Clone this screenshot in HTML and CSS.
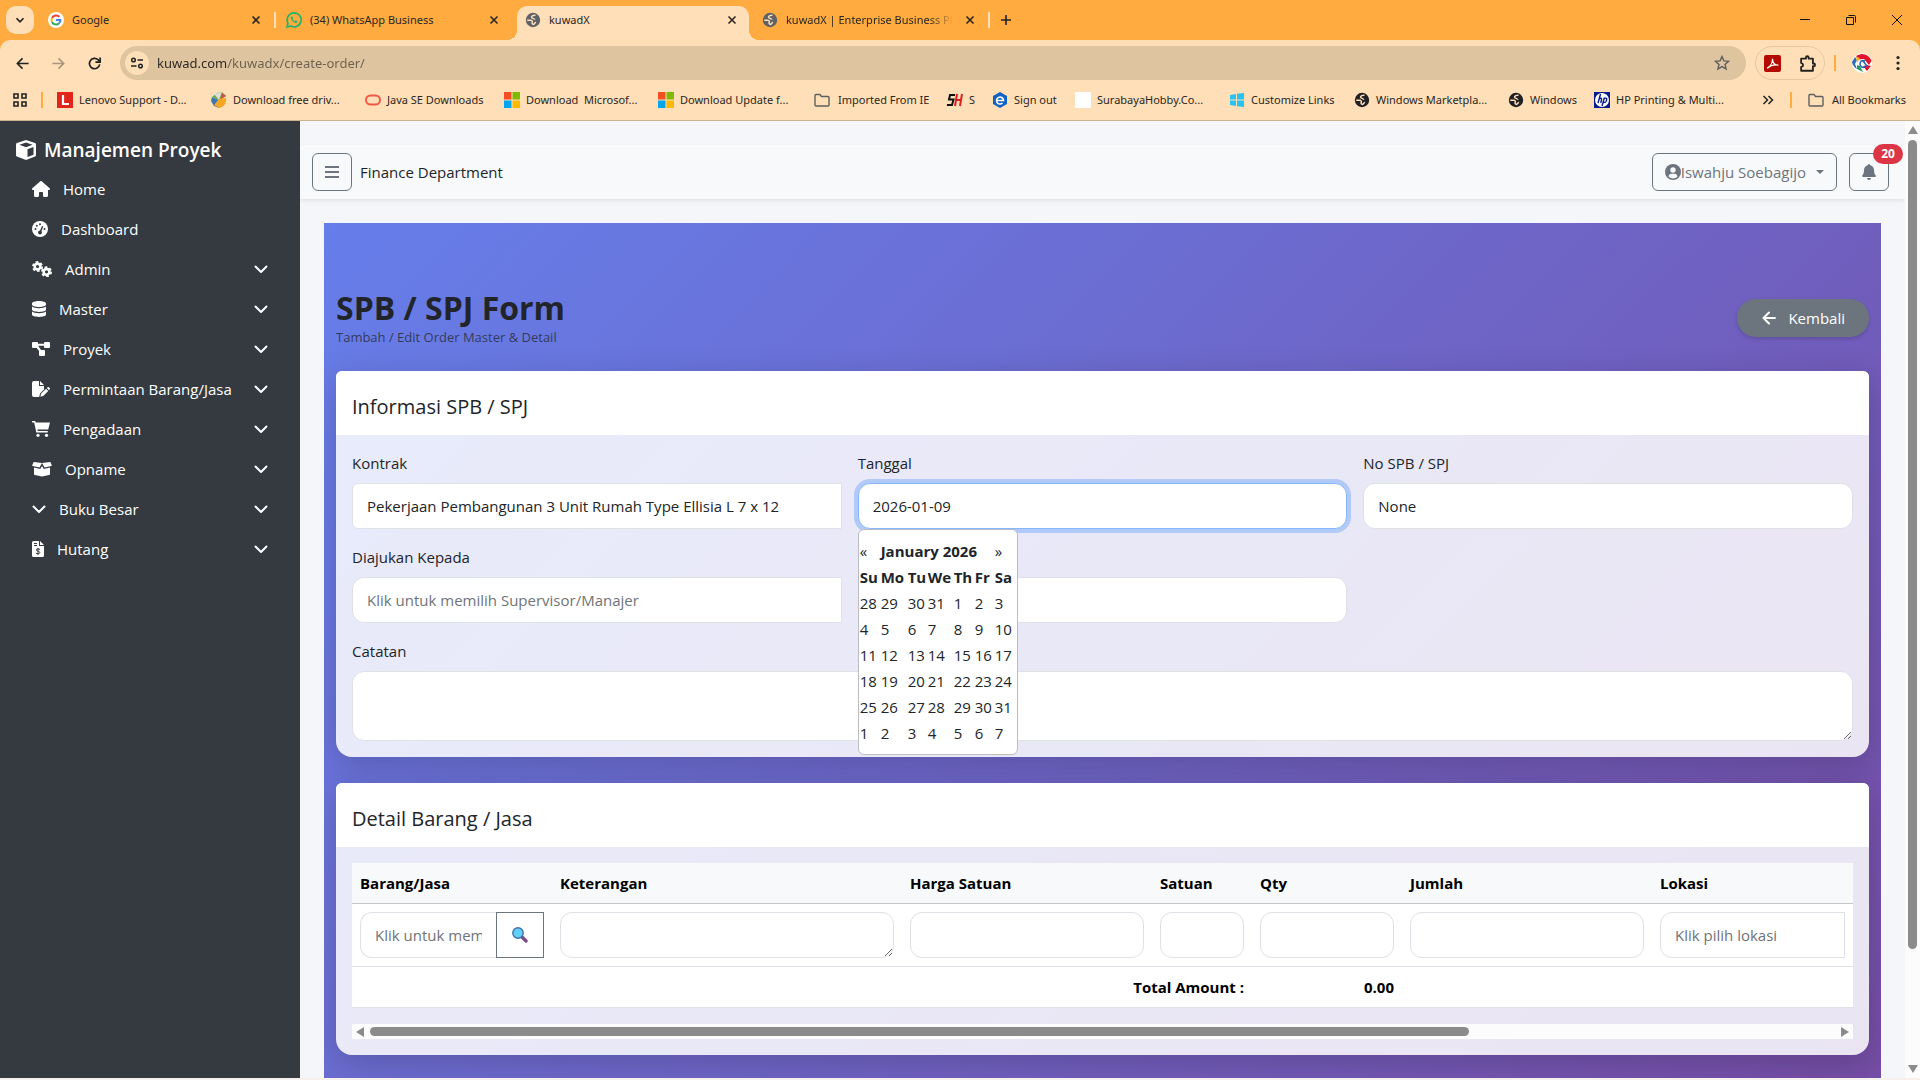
FILE: index.html
```html
<!DOCTYPE html>
<html lang="id">
<head>
<meta charset="UTF-8">
<meta name="viewport" content="width=device-width, initial-scale=1.0">
<title>kuwadX</title>
<link rel="stylesheet" href="styles.css">
</head>
<body>

<!-- shared icons -->
<svg class="icon-defs" aria-hidden="true">
    <symbol id="i-close" viewBox="0 0 16 16"><path d="M4.5 4.5l7 7M11.5 4.5l-7 7" stroke="currentColor" stroke-width="1.6" fill="none"/></symbol>
    <symbol id="i-globe" viewBox="0 0 16 16"><circle cx="8" cy="8" r="7.200" fill="currentColor"/><path d="M10.500 3.200C8.500 3 6.500 3.800 6.500 5.200s3.300 1 3.300 2.600M2.200 8.200h3.200c1.700 0 2.200 1 1.800 2.200s.3 1.800 1.300 2c1-.2 1.300-1.700 2.400-2.200" stroke="#ffdfb8" stroke-width="1.500" fill="none"/></symbol>
    <symbol id="i-ms" viewBox="0 0 16 16"><path fill="#f25022" d="M0 0h7.500v7.500H0z"/><path fill="#7fba00" d="M8.500 0H16v7.500H8.500z"/><path fill="#00a4ef" d="M0 8.500h7.500V16H0z"/><path fill="#ffb900" d="M8.500 8.500H16V16H8.500z"/></symbol>
    <symbol id="i-folder" viewBox="0 0 16 16"><path d="M1 3.500c0-.5.400-1 1-1h4l1.500 2H14c.6 0 1 .5 1 1V13c0 .5-.4 1-1 1H2c-.6 0-1-.5-1-1z" stroke="#5f5f5f" stroke-width="1.400" fill="none"/></symbol>
    <symbol id="i-chevron" viewBox="0 0 14 16"><path d="M1.500 5.500L7 11l5.500-5.500" stroke="currentColor" stroke-width="2" stroke-linecap="round" stroke-linejoin="round" fill="none"/></symbol>
</svg>

<header class="browser">
    <div class="tab-strip">
        <button class="tab-search" aria-label="Search tabs"><svg viewBox="0 0 16 16" width="14" height="14"><path d="M4 6l4 4 4-4" stroke="#222" stroke-width="2" fill="none"/></svg></button>
        <div class="tab tab-divided">
            <svg viewBox="0 0 16 16" class="tab-icon"><circle cx="8" cy="8" r="8" fill="#fff"/><g fill="none" stroke-width="2"><path d="M11.300 4.800A4.500 4.500 0 0 0 4 6" stroke="#ea4335"/><path d="M4 6a4.500 4.500 0 0 0 0 4" stroke="#fbbc05"/><path d="M4 10a4.500 4.500 0 0 0 6.800 1.500" stroke="#34a853"/><path d="M8 8h4.500a4.500 4.500 0 0 1-1.700 3.500" stroke="#4285f4"/></g></svg>
            <a href="#" class="tab-title">Google</a>
            <button class="tab-close" aria-label="Close tab"><svg><use href="#i-close"/></svg></button>
        </div>
        <div class="tab">
            <svg viewBox="0 0 16 16" class="tab-icon"><path d="M1 15l1-3.800A7 7 0 1 1 4.800 14z" fill="none" stroke="#25b466" stroke-width="1.700"/><path d="M5.200 4.500c-1 1.300-.2 3 1.300 4.500s3.600 2.500 4.700 1.300l.3-1-1.800-1-1 .9c-1-.4-1.800-1.200-2.200-2.100l.7-.9-.8-1.800z" fill="#25b466"/></svg>
            <a href="#" class="tab-title">(34) WhatsApp Business</a>
            <button class="tab-close" aria-label="Close tab"><svg><use href="#i-close"/></svg></button>
        </div>
        <div class="tab tab-active">
            <svg class="tab-icon globe-grey"><use href="#i-globe"/></svg>
            <a href="#" class="tab-title">kuwadX</a>
            <button class="tab-close" aria-label="Close tab"><svg><use href="#i-close"/></svg></button>
        </div>
        <div class="tab tab-divided">
            <svg class="tab-icon globe-grey"><use href="#i-globe"/></svg>
            <a href="#" class="tab-title tab-title-fade">kuwadX | Enterprise Business Pla</a>
            <button class="tab-close" aria-label="Close tab"><svg><use href="#i-close"/></svg></button>
        </div>
        <button class="new-tab" aria-label="New tab"><svg viewBox="0 0 16 16"><path d="M8 3v10M3 8h10" stroke="#222" stroke-width="1.600"/></svg></button>
        <div class="window-buttons">
            <button aria-label="Minimize"><svg viewBox="0 0 12 12"><path d="M1 5.500h10" stroke="#111"/></svg></button>
            <button aria-label="Restore"><svg viewBox="0 0 12 12"><path d="M1.500 3.500h7v7h-7zM3.500 1.500h6a1 1 0 0 1 1 1v6" stroke="#111" fill="none"/></svg></button>
            <button aria-label="Close window"><svg viewBox="0 0 12 12"><path d="M1 1l10 10M11 1L1 11" stroke="#111"/></svg></button>
        </div>
    </div>

    <div class="chrome-body">
        <div class="toolbar">
            <button class="nav-btn" aria-label="Back"><svg viewBox="0 0 16 16"><path d="M14.500 8H2.500M8 2.500L2.500 8 8 13.500" stroke="#222" stroke-width="1.700" fill="none"/></svg></button>
            <button class="nav-btn" aria-label="Forward"><svg viewBox="0 0 16 16"><path d="M1.500 8h12M8 2.500L13.500 8 8 13.500" stroke="#a8957c" stroke-width="1.700" fill="none"/></svg></button>
            <button class="nav-btn" aria-label="Reload"><svg viewBox="0 0 16 16"><path d="M13.500 9A5.500 5.500 0 1 1 12 4.200L13.500 6" stroke="#222" stroke-width="1.800" fill="none"/><path d="M14 1.500v5H9" stroke="#222" stroke-width="1.800" fill="none"/></svg></button>
            <div class="omnibox">
                <button class="site-info" aria-label="Site information"><svg viewBox="0 0 14 14"><g stroke="#222" stroke-width="1.500" fill="none"><circle cx="3.500" cy="4" r="1.800"/><path d="M7.500 4H13M1 10h5.500"/><circle cx="10.500" cy="10" r="1.800"/></g></svg></button>
                <input type="text" class="url" aria-label="Address" value="kuwad.com/kuwadx/create-order/">
                <button class="star" aria-label="Bookmark"><svg viewBox="0 0 16 16"><path d="M8 1.500l1.900 4.400 4.700.4-3.600 3.100 1.100 4.700L8 11.600l-4.100 2.500L5 9.400 1.400 6.300l4.700-.4z" stroke="#5f5f5f" stroke-width="1.400" fill="none"/></svg></button>
            </div>
            <div class="extensions">
                <button aria-label="PDF"><svg viewBox="0 0 16 16"><rect width="16" height="16" rx="2" fill="#b30b00"/><path d="M3 12.500c3-1.500 5-5.500 5-9 0 4 2 6 5.500 6C10 8.800 6 9.800 3 12.500z" fill="none" stroke="#fff" stroke-width="1.200"/></svg></button>
                <button aria-label="Extensions"><svg viewBox="0 0 16 16"><path d="M2 3.500h4.500v-1a1.300 1.300 0 0 1 2.600 0v1h4V8h.7a1.300 1.300 0 0 1 0 2.600h-.7v4.200H2v-3.600c2.500-.4 2.500-3.200 0-3.600z" fill="none" stroke="#222" stroke-width="1.700" stroke-linejoin="round"/></svg></button>
            </div>
            <span class="divider"></span>
            <button class="profile" aria-label="Profile"><svg viewBox="0 0 20 20"><circle cx="10" cy="10" r="10" fill="#fff"/><path d="M4 3a10 10 0 0 1 15.500 5L17 12l-5-6-5 .5z" fill="#e0142d"/><path d="M0 9l3-5 2 3-2 4 2 5a10 10 0 0 1-5-7z" fill="#2c6cc0"/><path d="M4 4l4 1-3 5z" fill="#f0b429"/><path d="M5 12l3 1 3 6-6-3z" fill="#239a58"/><path d="M11 13l4-1 4 1-4 5z" fill="#e0142d"/><path d="M13 8c-3-1-5 0-5 3s3 4 5 3M11 8l4 5" stroke="#2468b8" stroke-width="1.500" fill="none"/></svg></button>
            <button class="menu-dots" aria-label="Menu"><svg viewBox="0 0 16 16" fill="#222"><circle cx="8" cy="2.500" r="1.600"/><circle cx="8" cy="8" r="1.600"/><circle cx="8" cy="13.500" r="1.600"/></svg></button>
        </div>

        <nav class="bookmarks">
            <button class="apps" aria-label="Apps"><svg viewBox="0 0 14 14"><path d="M1 1h4v4H1zM9 1h4v4H9zM1 9h4v4H1zM9 9h4v4H9z" stroke="#222" stroke-width="1.600" fill="none"/></svg></button>
            <span class="divider"></span>
            <div class="bookmark-list">
                <a href="#"><svg viewBox="0 0 16 16"><path fill="#e1251b" d="M0 0h16v16H0z"/><path d="M6 3v9h6" stroke="#fff" stroke-width="2.200" fill="none"/></svg>Lenovo Support - D...</a>
                <a href="#"><svg viewBox="0 0 16 16"><path d="M8 8L1 5l-1 4 3 5 5 2z" fill="#3c78b4"/><path d="M8 8l7-4-4-4-5 1-5 4z" fill="#6fa845"/><path d="M3 2l5 6 3-8z" fill="#d8dde0"/><path d="M11 1l4 3-6 4z" fill="#d2543b"/><path d="M8 7l7-1c1 5-2 9-7 10l-5-3z" fill="#f3a722"/></svg>Download free driv...</a>
                <a href="#"><svg viewBox="0 0 16 16"><rect x="1" y="3.500" width="14" height="9" rx="4.500" fill="none" stroke="#ee5a45" stroke-width="2"/></svg>Java SE Downloads</a>
                <a href="#"><svg><use href="#i-ms"/></svg>Download&nbsp; Microsof...</a>
                <a href="#"><svg><use href="#i-ms"/></svg>Download Update f...</a>
                <a href="#" class="folder"><svg><use href="#i-folder"/></svg>Imported From IE</a>
                <a href="#"><svg viewBox="0 0 16 16" fill="none" stroke-width="2"><path d="M8 3H3L2 7.500h4.500L5 13H0" stroke="#111"/><path d="M10 2L8 14M15 2l-2 12M9 8h5" stroke="#e02020"/></svg>S</a>
                <a href="#"><svg viewBox="0 0 16 16"><path d="M8 0l7 4v8l-7 4-7-4V4z" fill="#0f62c4"/><path d="M4.500 8.500h7a3.500 3.500 0 1 0-1 2.500" stroke="#fff" stroke-width="1.600" fill="none"/></svg>Sign out</a>
                <a href="#"><svg viewBox="0 0 16 16"><path fill="#fff" d="M0 0h16v16H0z"/></svg>SurabayaHobby.Co...</a>
                <a href="#"><svg viewBox="0 0 16 16" fill="#27c3f3"><path d="M1 3l6-1v5.500H1zM8 1.800L15 1v6.500H8zM1 8.500h6V14l-6-1zM8 8.500h7V15l-7-.8z"/></svg>Customize Links</a>
                <a href="#"><svg class="globe-dark"><use href="#i-globe"/></svg>Windows Marketpla...</a>
                <a href="#"><svg class="globe-dark"><use href="#i-globe"/></svg>Windows</a>
                <a href="#"><svg viewBox="0 0 16 16"><path fill="#0a1a8c" d="M0 0h16v16H0z"/><circle cx="8" cy="8" r="7" fill="#fff"/><path d="M6.500 2L4 11M4.800 7.500C7 5.500 8 6 7.500 8l-.8 3M10.500 5.500L8 14M10 6.500c3-1 3 .2 2.500 2s-1 2.200-3.500 2" stroke="#0a1a8c" stroke-width="1.400" fill="none"/></svg>HP Printing &amp; Multi...</a>
            </div>
            <button class="more" aria-label="More bookmarks"><svg viewBox="0 0 12 12"><path d="M1.500 2l4 4-4 4M6.500 2l4 4-4 4" stroke="#222" stroke-width="1.500" fill="none"/></svg></button>
            <span class="divider"></span>
            <a href="#" class="all-bookmarks"><svg><use href="#i-folder"/></svg>All Bookmarks</a>
        </nav>
    </div>
</header>

<div class="app">
    <aside class="sidebar">
        <a href="#" class="brand"><svg viewBox="0 0 20 20" width="20" height="20"><path fill="#fff" d="M10 0l9 3q1 .4 1 1.400v10.800q0 1-.9 1.400L10 20l-9.100-3.400Q0 16.200 0 15.200V4.400Q0 3.400 1 3z"/><path d="M3.500 4.800L10 2.500l6.500 2.300L10 7.200zM11.500 9.200l6-2.200v7.800l-6 2.300z" fill="#343a40"/></svg>Manajemen Proyek</a>
        <ul>
            <li><a href="#"><svg viewBox="0 0 576 512" width="18"><path d="M575.800 255.500c0 18-15 32-32 32h-32v185c0 22-18 40-40 40h-80c-22 0-40-18-40-40v-88c0-18-14-32-32-32h-64c-18 0-32 14-32 32v88c0 22-18 40-40 40h-80c-22 0-40-18-40-40V287.600H32c-18 0-32-14-32-32 0-9 3-17 10-24L266.400 8c7-7 15-8 22-8s15 2 21 7L564.800 231.500c8 7 12 15 11 24z"/></svg>Home</a></li>
            <li><a href="#"><svg viewBox="0 0 16 16" width="16"><circle cx="8" cy="8" r="8"/><g fill="#343a40"><circle cx="3.500" cy="8" r="1"/><circle cx="4.800" cy="4.700" r="1"/><circle cx="8" cy="3.200" r="1"/><circle cx="12.500" cy="8" r="1"/><circle cx="8" cy="11.500" r="2"/></g><path d="M8 11.500l2.700-6.300" stroke="#343a40" stroke-width="1.500"/></svg>Dashboard</a></li>
            <li><a href="#"><svg viewBox="0 0 20 16" width="20"><g fill="none" stroke="#fff"><circle cx="5.500" cy="5.500" r="2.900" stroke-width="2.600"/><circle cx="5.500" cy="5.500" r="4.600" stroke-width="1.800" stroke-dasharray="2.600 2.217"/><circle cx="14.500" cy="10.800" r="2.900" stroke-width="2.600"/><circle cx="14.500" cy="10.800" r="4.600" stroke-width="1.800" stroke-dasharray="2.600 2.217"/></g></svg>Admin<svg class="caret"><use href="#i-chevron"/></svg></a></li>
            <li><a href="#"><svg viewBox="0 0 14 16" width="14"><path d="M0 2.500C0 1 3 0 7 0s7 1 7 2.500v1C14 5 11 6 7 6S0 5 0 3.500zM0 5.600C1.500 6.700 4 7.200 7 7.200s5.500-.5 7-1.600v3C14 10 11 11 7 11S0 10 0 8.600zM0 10.600c1.500 1.100 4 1.600 7 1.600s5.500-.5 7-1.600v3c0 1.400-3 2.400-7 2.400s-7-1-7-2.400z"/></svg>Master<svg class="caret"><use href="#i-chevron"/></svg></a></li>
            <li><a href="#"><svg viewBox="0 0 18 16" width="18"><path d="M1 1h4q1 0 1 1v.8h6V2q0-1 1-1h4q1 0 1 1v4q0 1-1 1h-4q-1 0-1-1V4.800H6.200L9 9h3q1 0 1 1v4q0 1-1 1H8q-1 0-1-1v-4L4.800 7H1Q0 7 0 6V2q0-1 1-1z"/></svg>Proyek<svg class="caret"><use href="#i-chevron"/></svg></a></li>
            <li><a href="#"><svg viewBox="0 0 18 16" width="18"><path d="M2 0h5v5h5v3.500l-4 4L7.200 16H2q-2 0-2-2V2q0-2 2-2zM8 0l4 4H8zM9 12.800l5-5 2.200 2.200-5 5-2.800.7zM14.800 7l.9-.8q.6-.5 1.200 0l.9 1q.5.600 0 1.100l-.8.900z"/></svg>Permintaan Barang/Jasa<svg class="caret"><use href="#i-chevron"/></svg></a></li>
            <li><a href="#"><svg viewBox="0 0 18 16" width="18"><path d="M0 0h3.200l.5 1.500H18L16.200 8.500H5.400l.4 1.600h10v1.500H4.300L2.200 1.500H0z"/><circle cx="6" cy="14.300" r="1.600"/><circle cx="14.500" cy="14.300" r="1.600"/></svg>Pengadaan<svg class="caret"><use href="#i-chevron"/></svg></a></li>
            <li><a href="#"><svg viewBox="0 0 20 16" width="20"><path d="M1.700 1L10 2l-2.500 4.500L.8 5q-.9-.3-.5-1.100zM18.300 1L10 2l2.500 4.500 6.700-1.500q.9-.3.5-1.100zM2 6.500l6.200 1.600L10 5l1.800 3.100L18 6.500V13q0 .8-.8 1L10 15.500 2.800 14Q2 13.800 2 13z"/></svg>Opname<svg class="caret"><use href="#i-chevron"/></svg></a></li>
            <li><a href="#"><svg width="14"><use href="#i-chevron"/></svg>Buku Besar<svg class="caret"><use href="#i-chevron"/></svg></a></li>
            <li><a href="#"><svg viewBox="0 0 12 16" width="12"><path d="M1.500 0H7v5h5v9.500q0 1.500-1.500 1.500h-9Q0 16 0 14.500v-13Q0 0 1.500 0zM8 0l4 4H8z"/><path d="M2 2.500h3M2 4.500h3M8 8.500C7 7.500 4.200 7.700 4.300 9s3.500 1 3.500 2.500-3 1.700-3.900.6M6 6.900v7" stroke="#343a40" fill="none"/></svg>Hutang<svg class="caret"><use href="#i-chevron"/></svg></a></li>
        </ul>
    </aside>

    <main class="main">
        <div class="navbar">
            <button class="outline-btn square" aria-label="Toggle menu"><svg viewBox="0 0 14 16" width="14" height="16"><path d="M0 3h14M0 8h14M0 13h14" stroke="currentColor" stroke-width="2"/></svg></button>
            <span class="department">Finance Department</span>
            <button class="outline-btn user"><svg viewBox="0 0 16 16" width="16" height="16"><circle cx="8" cy="8" r="8" fill="currentColor"/><circle cx="8" cy="6" r="2.700" fill="#f8f9fa"/><path d="M3.500 12.800Q4 9.800 6.500 9.800h3q2.500 0 3 3-4.500 3.500-9 0z" fill="#f8f9fa"/></svg>Iswahju Soebagijo<span class="dropdown-caret"></span></button>
            <button class="outline-btn square bell" aria-label="Notifications"><svg viewBox="0 0 14 16" width="14" height="16"><path fill="currentColor" d="M7 0q1 0 1 1.100c2.200.5 4 2.400 4 4.900 0 3 .7 4.500 1.800 5.500.4.600.1 1.500-.8 1.500H1c-.9 0-1.200-.9-.8-1.500C1.300 10.500 2 9 2 6c0-2.500 1.800-4.400 4-4.900Q6 0 7 0zM5 14h4q0 2-2 2t-2-2z"/></svg><span class="badge">20</span></button>
        </div>

        <section class="order-page">
            <div class="page-head">
                <div>
                    <h1>SPB / SPJ Form</h1>
                    <p>Tambah / Edit Order Master &amp; Detail</p>
                </div>
                <button class="back-btn"><svg viewBox="0 0 14 16" width="16" height="16"><path d="M13 8H2M7 2.500L1.500 8 7 13.500" stroke="#fff" stroke-width="2" stroke-linecap="round" stroke-linejoin="round" fill="none"/></svg>Kembali</button>
            </div>

            <form class="card">
                <h2>Informasi SPB / SPJ</h2>
                <div class="card-body form-grid">
                    <div class="field">
                        <label for="kontrak">Kontrak</label>
                        <input type="text" id="kontrak" class="control join-left small-radius" value="Pekerjaan Pembangunan 3 Unit Rumah Type Ellisia L 7 x 12">
                    </div>
                    <div class="field date-field">
                        <label for="tanggal">Tanggal</label>
                        <input type="text" id="tanggal" class="control is-focused" value="2026-01-09">
                        <div class="datepicker">
                            <table>
                                <colgroup><col class="w21"><col class="w27"><col class="w20"><col class="w26"><col class="w21"><col class="w20"><col class="w20"></colgroup>
                                <thead>
                                    <tr><th class="arrow">«</th><th colspan="5">January 2026</th><th class="arrow">»</th></tr>
                                    <tr><th>Su</th><th>Mo</th><th>Tu</th><th>We</th><th>Th</th><th>Fr</th><th>Sa</th></tr>
                                </thead>
                                <tbody>
                                    <tr><td>28</td><td>29</td><td>30</td><td>31</td><td>1</td><td>2</td><td>3</td></tr>
                                    <tr><td>4</td><td>5</td><td>6</td><td>7</td><td>8</td><td>9</td><td>10</td></tr>
                                    <tr><td>11</td><td>12</td><td>13</td><td>14</td><td>15</td><td>16</td><td>17</td></tr>
                                    <tr><td>18</td><td>19</td><td>20</td><td>21</td><td>22</td><td>23</td><td>24</td></tr>
                                    <tr><td>25</td><td>26</td><td>27</td><td>28</td><td>29</td><td>30</td><td>31</td></tr>
                                    <tr><td>1</td><td>2</td><td>3</td><td>4</td><td>5</td><td>6</td><td>7</td></tr>
                                </tbody>
                            </table>
                        </div>
                    </div>
                    <div class="field">
                        <label for="nomor">No SPB / SPJ</label>
                        <input type="text" id="nomor" class="control" value="None">
                    </div>
                    <div class="field">
                        <label for="diajukan">Diajukan Kepada</label>
                        <input type="text" id="diajukan" class="control join-left" placeholder="Klik untuk memilih Supervisor/Manajer">
                    </div>
                    <div class="field no-label">
                        <input type="text" class="control" aria-label="Jabatan">
                    </div>
                    <div class="field full">
                        <label for="catatan">Catatan</label>
                        <textarea id="catatan" class="control note"></textarea>
                    </div>
                </div>
            </form>

            <form class="card">
                <h2>Detail Barang / Jasa</h2>
                <div class="card-body">
                    <div class="table-wrap">
                        <table class="items">
                            <colgroup><col class="c-item"><col class="c-desc"><col class="c-price"><col class="c-unit"><col class="c-qty"><col class="c-price"><col></colgroup>
                            <thead>
                                <tr><th>Barang/Jasa</th><th>Keterangan</th><th>Harga Satuan</th><th>Satuan</th><th>Qty</th><th>Jumlah</th><th>Lokasi</th></tr>
                            </thead>
                            <tbody>
                                <tr>
                                    <td><div class="input-group"><input type="text" class="control join-left" aria-label="Barang/Jasa" placeholder="Klik untuk memilih barang"><button type="button" class="search-btn" aria-label="Cari"><svg viewBox="0 0 16 16" width="16" height="16"><path d="M9.500 9.500l4.500 4.500" stroke="#7d4a8c" stroke-width="3.400" stroke-linecap="round"/><circle cx="6" cy="6" r="5.200" fill="#5fd0f5" stroke="#3e6fae" stroke-width="1.400"/></svg></button></div></td>
                                    <td><textarea class="control" aria-label="Keterangan"></textarea></td>
                                    <td><input type="text" class="control" aria-label="Harga Satuan"></td>
                                    <td><input type="text" class="control" aria-label="Satuan"></td>
                                    <td><input type="text" class="control" aria-label="Qty"></td>
                                    <td><input type="text" class="control" aria-label="Jumlah"></td>
                                    <td><input type="text" class="control join-left" aria-label="Lokasi" placeholder="Klik pilih lokasi"></td>
                                </tr>
                            </tbody>
                            <tfoot>
                                <tr><th colspan="4">Total Amount :</th><th>0.00</th><th colspan="2"></th></tr>
                            </tfoot>
                        </table>
                    </div>
                    <div class="hscroll">
                        <span class="arrow-left"></span>
                        <div class="htrack"><div class="hthumb"></div></div>
                        <span class="arrow-right"></span>
                    </div>
                </div>
            </form>
        </section>
    </main>

    <div class="vscroll">
        <span class="arrow-up"></span>
        <div class="vtrack"><div class="vthumb"></div></div>
        <span class="arrow-down"></span>
    </div>
</div>

</body>
</html>
```

FILE: styles.css
```css
* {
    box-sizing: border-box;
}

body {
    margin: 0;
    height: 100vh;
    display: flex;
    flex-direction: column;
    overflow: hidden;
    font-family: "Segoe UI", "Open Sans", "Noto Sans", sans-serif;
    font-size: 15px;
    line-height: 24px;
    color: #212529;
    background: #f4f6fa;
}

button, input, textarea {
    font: inherit;
    color: inherit;
}

button {
    border: none;
    background: none;
    padding: 0;
    cursor: pointer;
}

a {
    color: inherit;
    text-decoration: none;
}

svg {
    flex-shrink: 0;
}

.icon-defs {
    position: absolute;
    width: 0;
    height: 0;
}

/* ---------- browser bar ---------- */

.browser {
    flex-shrink: 0;
    background: #ffab40;
    font-family: "Noto Sans", sans-serif;
    font-size: 11px;
    line-height: 16px;
    color: #2b2622;
    border-bottom: 1px solid #cdb290;
}

.tab-strip {
    display: flex;
    align-items: center;
    height: 40px;
}

.tab-search {
    width: 28px;
    height: 28px;
    margin: 0 4px 0 6px;
    border-radius: 10px;
    background: #ffdfb8;
    display: flex;
    align-items: center;
    justify-content: center;
}

.tab {
    position: relative;
    width: 238px;
    height: 34px;
    padding: 0 12px 0 10px;
    display: flex;
    align-items: center;
    gap: 8px;
}

.tab-divided {
    background: linear-gradient(#ffdfb8, #ffdfb8) right center / 2px 16px no-repeat;
}

.tab-active {
    width: 232px;
    height: 34px;
    margin: 6px 3px 0;
    padding: 0 9px 6px 8px;
    border-radius: 10px 10px 0 0;
    background: #ffdfb8;
}

.tab-active::before,
.tab-active::after {
    content: "";
    position: absolute;
    bottom: 0;
    width: 10px;
    height: 10px;
}

.tab-active::before {
    left: -10px;
    background: radial-gradient(circle at 0 0, transparent 10px, #ffdfb8 10px);
}

.tab-active::after {
    right: -10px;
    background: radial-gradient(circle at 100% 0, transparent 10px, #ffdfb8 10px);
}

.tab-icon {
    width: 16px;
    height: 16px;
}

.globe-grey {
    color: #5f6368;
}

.globe-dark {
    color: #202124;
}

.tab-title {
    flex: 1;
    overflow: hidden;
    white-space: nowrap;
}

.tab-title-fade {
    -webkit-mask-image: linear-gradient(90deg, #000 85%, transparent);
    mask-image: linear-gradient(90deg, #000 85%, transparent);
}

.tab-close,
.tab-close svg {
    width: 16px;
    height: 16px;
    display: block;
}

.new-tab {
    width: 32px;
    height: 32px;
}

.new-tab svg {
    width: 16px;
    height: 16px;
    display: block;
    margin: auto;
}

.window-buttons {
    margin-left: auto;
    display: flex;
}

.window-buttons button {
    width: 46px;
    height: 32px;
}

.window-buttons svg {
    width: 12px;
    height: 12px;
    display: block;
    margin: auto;
}

.chrome-body {
    background: #ffdfb8;
    border-radius: 10px 10px 0 0;
}

.toolbar {
    display: flex;
    align-items: center;
    height: 40px;
    padding: 6px 14px 0 4px;
}

.nav-btn {
    width: 36px;
    height: 32px;
}

.nav-btn svg {
    width: 15px;
    height: 15px;
    display: block;
    margin: auto;
}

.omnibox {
    flex: 1;
    height: 34px;
    margin: 0 9px 0 8px;
    padding: 0 16px 0 5px;
    display: flex;
    align-items: center;
    border-radius: 17px;
    background: #dfc4a0;
}

.site-info {
    width: 24px;
    height: 24px;
    border-radius: 50%;
    background: #ffdfb8;
}

.site-info svg {
    width: 14px;
    height: 14px;
    display: block;
    margin: auto;
}

.url {
    flex: 1;
    border: none;
    outline: none;
    padding: 0;
    margin-left: 8px;
    font-size: 13px;
    /* domain dark, path lighter */
    background: linear-gradient(90deg, #2b2622 70px, #6b5f50 70px);
    -webkit-background-clip: text;
    background-clip: text;
    color: transparent;
}

.star svg {
    width: 16px;
    height: 16px;
    display: block;
}

.extensions {
    display: flex;
    align-items: center;
    justify-content: space-between;
    width: 70px;
    height: 34px;
    padding: 0 8px;
    border: 1px solid #e6c8a0;
    border-radius: 17px;
}

.extensions svg {
    width: 17px;
    height: 17px;
    display: block;
}

.divider {
    width: 2px;
    height: 16px;
    background: #ffab40;
}

.toolbar .divider {
    margin: 0 16px 0 9px;
}

.profile svg {
    width: 20px;
    height: 20px;
    display: block;
}

.menu-dots {
    margin-left: 18px;
}

.menu-dots svg {
    width: 16px;
    height: 16px;
    display: block;
}

.bookmarks {
    display: flex;
    align-items: center;
    height: 40px;
    padding: 0 14px 0 13px;
    white-space: nowrap;
}

.apps svg {
    width: 14px;
    height: 14px;
    display: block;
}

.apps + .divider {
    margin: 0 14px;
}

.bookmark-list {
    flex: 1;
    display: grid;
    grid-template-columns: 154px 154px 139px 154px 156px 133px 45px 83px 154px 125px 154px 86px auto;
    overflow: hidden;
}

.bookmark-list a,
.all-bookmarks {
    display: flex;
    align-items: center;
    gap: 6px;
}

.bookmark-list svg,
.all-bookmarks svg {
    width: 16px;
    height: 16px;
}

.bookmark-list .folder,
.all-bookmarks {
    gap: 8px;
}

.more svg {
    width: 12px;
    height: 12px;
    display: block;
}

.more + .divider {
    margin: 0 16px;
}

/* ---------- app layout ---------- */

.app {
    flex: 1;
    min-height: 0;
    display: flex;
    border-bottom: 2px solid #f7f1ee;
}

.sidebar {
    width: 300px;
    flex-shrink: 0;
    background: #343a40;
    color: #fff;
}

.brand {
    display: flex;
    align-items: center;
    gap: 8px;
    height: 48px;
    padding: 10px 16px 0;
    font-size: 19px;
    font-weight: 600;
}

.sidebar ul {
    list-style: none;
    margin: 0;
    padding: 0;
}

.sidebar li a {
    display: flex;
    align-items: center;
    gap: 13px;
    height: 40px;
    padding: 0 32px;
}

.sidebar li svg {
    height: 16px;
    fill: currentColor;
}

.sidebar li .caret {
    width: 14px;
    margin-left: auto;
}

.main {
    flex: 1;
    min-width: 0;
    overflow-y: auto;
    scrollbar-width: none;
}

.navbar {
    display: flex;
    align-items: center;
    height: 54px;
    margin-top: 24px;
    padding: 0 16px 0 12px;
    background: #f8f9fa;
    box-shadow: 0 2px 4px rgba(0, 0, 0, 0.08);
}

.outline-btn {
    display: flex;
    align-items: center;
    height: 38px;
    padding: 0 12px;
    border: 1px solid #6c757d;
    border-radius: 6px;
    color: #6c757d;
}

.square {
    width: 40px;
}

.department {
    margin-left: 8px;
}

.user {
    margin-left: auto;
}

.dropdown-caret {
    margin-left: 10px;
    border: 4px solid transparent;
    border-top-color: #6c757d;
    border-bottom: none;
}

.bell {
    position: relative;
    margin-left: 12px;
}

.badge {
    position: absolute;
    top: -10px;
    right: -15px;
    width: 30px;
    height: 20px;
    border-radius: 10px;
    background: #dc3545;
    color: #fff;
    font-size: 12px;
    line-height: 20px;
    font-weight: 700;
    text-align: center;
}

/* ---------- order page ---------- */

.order-page {
    margin: 24px;
    padding: 66px 12px 98px;
    overflow: hidden;
    background: linear-gradient(135deg, #667eea 0%, #764ba2 100%);
}

.page-head {
    display: flex;
    align-items: center;
    justify-content: space-between;
    margin-bottom: 24px;
}

h1 {
    margin: 0;
    font-size: 32px;
    line-height: 38px;
    font-weight: 700;
}

.page-head p {
    margin: 0;
    font-size: 13px;
    line-height: 20px;
    color: rgba(33, 37, 41, 0.75);
}

.back-btn {
    display: flex;
    align-items: center;
    gap: 11px;
    height: 38px;
    padding: 0 24px;
    border-radius: 19px;
    background: #6c757d;
    color: #fff;
    box-shadow: 0 2px 4px rgba(0, 0, 0, 0.15);
}

.card {
    margin-bottom: 26px;
    border-radius: 6px 6px 16px 16px;
    background: rgba(255, 255, 255, 0.85);
    box-shadow: 0 8px 32px rgba(0, 0, 0, 0.18);
}

.card h2 {
    margin: 0;
    padding: 24px 16px 16px;
    border-radius: 6px 6px 0 0;
    background: #fff;
    font-size: 20px;
    line-height: 24px;
    font-weight: 500;
}

.card-body {
    padding: 16px;
}

.form-grid {
    display: grid;
    grid-template-columns: repeat(3, 1fr);
    gap: 16px;
}

.field label {
    display: block;
    margin-bottom: 8px;
}

.no-label {
    align-self: end;
}

.full {
    grid-column: 1 / -1;
}

.control {
    display: block;
    width: 100%;
    height: 46px;
    padding: 0 14px;
    border: 1px solid #dee2e6;
    border-radius: 12px;
    background: #fff;
    outline: none;
}

.control::placeholder {
    color: #6f7478;
    opacity: 1;
}

.note {
    height: 70px;
}

.join-left {
    border-top-right-radius: 0;
    border-bottom-right-radius: 0;
}

.small-radius {
    border-top-left-radius: 6px;
    border-bottom-left-radius: 6px;
}

.is-focused {
    border-color: #86b7fe;
    box-shadow: 0 0 0 4px rgba(13, 110, 253, 0.25);
}

.date-field {
    position: relative;
}

.datepicker {
    position: absolute;
    top: 100%;
    left: 0;
    z-index: 10;
    width: 160px;
    padding: 8px 0;
    border: 1px solid #bbbcc4;
    border-radius: 6px;
    background: #fff;
}

.datepicker table {
    width: 155px;
    table-layout: fixed;
    border-collapse: collapse;
}

.datepicker th,
.datepicker td {
    height: 26px;
    padding: 1px 0 1px 1px;
    text-align: left;
    white-space: nowrap;
}

.datepicker .arrow {
    font-weight: 400;
}

.w20 { width: 20px; }
.w21 { width: 21px; }
.w26 { width: 26px; }
.w27 { width: 27px; }

/* ---------- items table ---------- */

.table-wrap {
    overflow-x: auto;
    scrollbar-width: none;
    margin-bottom: 16px;
}

.items {
    width: 100%;
    min-width: 1500px;
    table-layout: fixed;
    border-collapse: separate;
    border-spacing: 0;
    background: #fff;
    color: #000;
}

.c-item { width: 200px; }
.c-desc { width: 350px; }
.c-price { width: 250px; }
.c-unit { width: 100px; }
.c-qty { width: 150px; }

.items th,
.items td {
    padding: 8px;
    border-bottom: 1px solid #dee2e6;
    text-align: left;
}

.items thead th {
    background: #f8f9fa;
    border-bottom-color: #c6c7c8;
}

.items tfoot th {
    text-align: right;
}

.input-group {
    display: flex;
}

.input-group .control {
    flex: 1;
    min-width: 0;
    border-right: none;
}

.search-btn {
    width: 48px;
    height: 46px;
    border: 1px solid #6c757d;
    display: flex;
    align-items: center;
    justify-content: center;
}

/* ---------- scroll bars ---------- */

.hscroll {
    display: flex;
    align-items: center;
    gap: 6px;
    height: 15px;
    padding: 0 4px;
    background: #fcfcfc;
}

.htrack {
    flex: 1;
}

.hthumb {
    width: 75%;
    height: 9px;
    border-radius: 5px;
    background: #8b8b8b;
}

.arrow-left,
.arrow-right {
    border: 5px solid transparent;
}

.arrow-left {
    border-left: none;
    border-right: 8px solid #8b8b8b;
}

.arrow-right {
    border-right: none;
    border-left: 8px solid #8b8b8b;
}

.vscroll {
    width: 15px;
    flex-shrink: 0;
    display: flex;
    flex-direction: column;
    align-items: center;
    gap: 6px;
    padding: 5px 0;
    background: #fcfcfc;
}

.vtrack {
    flex: 1;
}

.vthumb {
    width: 9px;
    height: 88%;
    border-radius: 5px;
    background: #8b8b8b;
}

.arrow-up,
.arrow-down {
    border: 5px solid transparent;
}

.arrow-up {
    border-top: none;
    border-bottom: 8px solid #8b8b8b;
}

.arrow-down {
    border-bottom: none;
    border-top: 8px solid #8b8b8b;
}
```
